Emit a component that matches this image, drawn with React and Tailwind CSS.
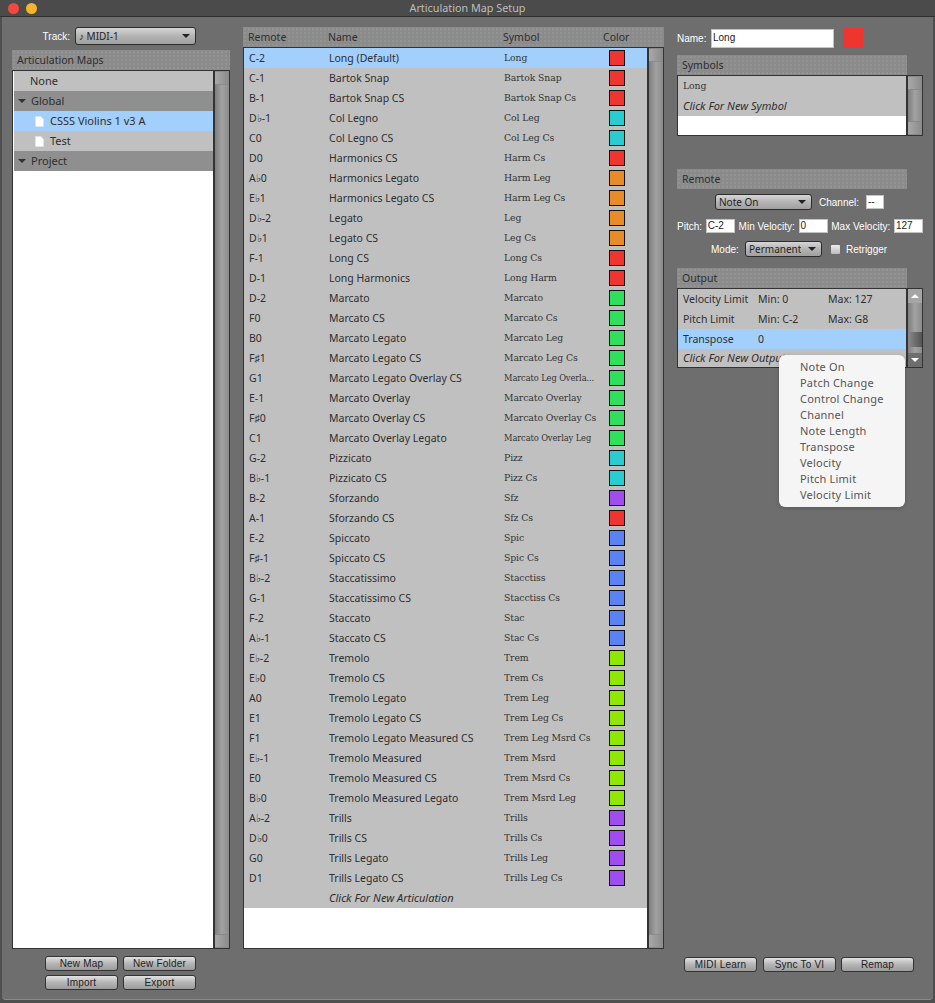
const RED = "bg-[#ee3530]";
const TEAL = "bg-[#2accd0]";
const ORANGE = "bg-[#e88c2a]";
const GREEN = "bg-[#30e05c]";
const PURPLE = "bg-[#a04df0]";
const BLUE = "bg-[#5b82f2]";
const LIME = "bg-[#90e800]";

const rows = [
  ["C-2", "Long (Default)", "Long", RED],
  ["C-1", "Bartok Snap", "Bartok Snap", RED],
  ["B-1", "Bartok Snap CS", "Bartok Snap Cs", RED],
  ["D♭-1", "Col Legno", "Col Leg", TEAL],
  ["C0", "Col Legno CS", "Col Leg Cs", TEAL],
  ["D0", "Harmonics CS", "Harm Cs", RED],
  ["A♭0", "Harmonics Legato", "Harm Leg", ORANGE],
  ["E♭1", "Harmonics Legato CS", "Harm Leg Cs", ORANGE],
  ["D♭-2", "Legato", "Leg", ORANGE],
  ["D♭1", "Legato CS", "Leg Cs", ORANGE],
  ["F-1", "Long CS", "Long Cs", RED],
  ["D-1", "Long Harmonics", "Long Harm", RED],
  ["D-2", "Marcato", "Marcato", GREEN],
  ["F0", "Marcato CS", "Marcato Cs", GREEN],
  ["B0", "Marcato Legato", "Marcato Leg", GREEN],
  ["F♯1", "Marcato Legato CS", "Marcato Leg Cs", GREEN],
  ["G1", "Marcato Legato Overlay CS", "Marcato Leg Overla...", GREEN],
  ["E-1", "Marcato Overlay", "Marcato Overlay", GREEN],
  ["F♯0", "Marcato Overlay CS", "Marcato Overlay Cs", GREEN],
  ["C1", "Marcato Overlay Legato", "Marcato Overlay Leg", GREEN],
  ["G-2", "Pizzicato", "Pizz", TEAL],
  ["B♭-1", "Pizzicato CS", "Pizz Cs", TEAL],
  ["B-2", "Sforzando", "Sfz", PURPLE],
  ["A-1", "Sforzando CS", "Sfz Cs", RED],
  ["E-2", "Spiccato", "Spic", BLUE],
  ["F♯-1", "Spiccato CS", "Spic Cs", BLUE],
  ["B♭-2", "Staccatissimo", "Stacctiss", BLUE],
  ["G-1", "Staccatissimo CS", "Stacctiss Cs", BLUE],
  ["F-2", "Staccato", "Stac", BLUE],
  ["A♭-1", "Staccato CS", "Stac Cs", BLUE],
  ["E♭-2", "Tremolo", "Trem", LIME],
  ["E♭0", "Tremolo CS", "Trem Cs", LIME],
  ["A0", "Tremolo Legato", "Trem Leg", LIME],
  ["E1", "Tremolo Legato CS", "Trem Leg Cs", LIME],
  ["F1", "Tremolo Legato Measured CS", "Trem Leg Msrd Cs", LIME],
  ["E♭-1", "Tremolo Measured", "Trem Msrd", LIME],
  ["E0", "Tremolo Measured CS", "Trem Msrd Cs", LIME],
  ["B♭0", "Tremolo Measured Legato", "Trem Msrd Leg", LIME],
  ["A♭-2", "Trills", "Trills", PURPLE],
  ["D♭0", "Trills CS", "Trills Cs", PURPLE],
  ["G0", "Trills Legato", "Trills Leg", PURPLE],
  ["D1", "Trills Legato CS", "Trills Leg Cs", PURPLE],
];

const menuItems = ["Note On", "Patch Change", "Control Change", "Channel", "Note Length", "Transpose", "Velocity", "Pitch Limit", "Velocity Limit"];

const headerClass =
  "h-5 flex items-center pl-[5px] pt-[1px] bg-[#8b8b8b] bg-[radial-gradient(#939393_1px,transparent_1px)] bg-[length:4px_4px] text-[#2e2e2e] text-[10.5px]";
const serif = "font-['DejaVu_Serif',serif] text-[9.3px] tracking-[-0.1px] text-[#333]";
// long symbols get squeezed to fit the column in the reference
const serifSmall = "font-['DejaVu_Serif',serif] text-[8.3px] tracking-[-0.1px] text-[#333]";

function Header({ children, className = "" }) {
  return <div className={`${headerClass} ${className}`}>{children}</div>;
}

function Scrollbar({ arrows, thumb }) {
  const cap = "h-[14px] shrink-0 bg-gradient-to-r from-[#a8a8a8] via-[#9a9a9a] to-[#8a8a8a] border-y border-[#8a8a8a]";
  return (
    <div className="w-4 shrink-0 flex flex-col justify-between border-l-2 border-[#333] bg-gradient-to-r from-[#7f7f7f] via-[#a2a2a2] to-[#8b8b8b] relative">
      {arrows ? (
        <div className="h-[14px] flex items-center justify-center bg-[#a5a5a5]">
          <div className="w-0 h-0 border-x-[4px] border-x-transparent border-b-[4px] border-b-white" />
        </div>
      ) : (
        <div className={cap} />
      )}
      {thumb && <div className="absolute left-0 right-0 top-[43px] h-[15px] bg-gradient-to-r from-[#8a8a8a] to-[#555]" />}
      {arrows ? (
        <div className="h-[14px] flex items-center justify-center bg-[#6e6e6e]">
          <div className="w-0 h-0 border-x-[4px] border-x-transparent border-t-[4px] border-t-white" />
        </div>
      ) : (
        <div className={cap} />
      )}
    </div>
  );
}

function Btn({ children, className = "" }) {
  return (
    <button className={`h-[15px] rounded-[3px] border border-[#333] bg-gradient-to-b from-[#e2e2e2] via-[#b5b5b5] to-[#9c9c9c] text-[10px] leading-none text-[#222] font-['Liberation_Sans',sans-serif] tracking-[0.2px] ${className}`}>
      {children}
    </button>
  );
}

function Select({ children, className = "" }) {
  return (
    <div className={`shrink-0 flex items-center justify-between rounded-[3px] border border-[#2c2c2c] bg-gradient-to-b from-[#d6d6d6] via-[#b4b4b4] to-[#a0a0a0] pl-[3px] pr-[5px] text-[10px] text-[#222] ${className}`}>
      <span className="truncate">{children}</span>
      <div className="w-0 h-0 border-x-[4px] border-x-transparent border-t-[4px] border-t-[#222]" />
    </div>
  );
}

function Field({ value, className = "" }) {
  return (
    <div className={`shrink-0 h-[14px] flex items-center bg-white border border-[#c4c4c4] px-[1px] text-[10px] leading-none text-[#222] font-['Liberation_Sans',sans-serif] ${className}`}>
      {value}
    </div>
  );
}

function FileIcon() {
  return (
    <svg width="9" height="11" viewBox="0 0 9 11" className="shrink-0">
      <path d="M0.5 0.5H5.8L8.5 3.2V10.5H0.5Z" fill="#fff" stroke="#e4e4e4" strokeWidth="0.6" />
    </svg>
  );
}

function Caret() {
  return <div className="w-0 h-0 border-x-[4px] border-x-transparent border-t-[4px] border-t-[#333] ml-[4px] mr-[5px]" />;
}

function Label({ children, className = "" }) {
  return <span className={`shrink-0 font-['Liberation_Sans',sans-serif] text-[10px] text-white ${className}`}>{children}</span>;
}

export default function App() {
  return (
    <div className="w-[935px] h-[1003px] overflow-hidden flex flex-col bg-[#4f4f4f] font-['Noto_Sans',sans-serif] relative">
      {/* Title bar */}
      <div className="h-[17px] shrink-0 relative flex items-center justify-center bg-[#4b4b4b] border-b border-[#2f2f2f]">
        <div className="absolute left-2 top-[3px] flex gap-[7px]">
          <div className="w-[11px] h-[11px] rounded-full bg-[#f04a3e]" />
          <div className="w-[11px] h-[11px] rounded-full bg-[#f6b32d]" />
        </div>
        <span className="text-[10.8px] text-[#bdbdbd]">Articulation Map Setup</span>
      </div>

      <div className="flex-1 flex mx-[2px] mb-[3px] rounded-b-[4px] border-b border-[#8a8a8a] bg-[#6e6e6e] pl-[10px] pr-[10px] pt-[10px] gap-[13px] min-h-0">
        {/* Left column */}
        <div className="w-[218px] shrink-0 flex flex-col">
          <div className="h-[18px] flex items-center justify-end gap-[5px] pr-[34px] mb-[5px]">
            <Label>Track:</Label>
            <Select className="w-[121px] h-[18px]">♪ MIDI-1</Select>
          </div>
          <Header>Articulation Maps</Header>
          <div className="h-[879px] flex border border-[#333] bg-white">
            <div className="flex-1 pl-[1px] text-[11px] text-[#2e2e2e]">
              <div className="h-[20px] flex items-center bg-[#c0c0c0] pl-[16px]">None</div>
              <div className="h-[20px] flex items-center bg-[#8f8f8f]"><Caret />Global</div>
              <div className="h-[20px] flex items-center gap-[6px] bg-[#a3cffd] pl-[21px] pt-[1px]"><FileIcon />CSSS Violins 1 v3 A</div>
              <div className="h-[20px] flex items-center gap-[6px] bg-[#c0c0c0] pl-[21px]"><FileIcon />Test</div>
              <div className="h-[20px] flex items-center bg-[#8f8f8f]"><Caret />Project</div>
            </div>
            <Scrollbar />
          </div>
          <div className="mt-[7px] grid grid-cols-[73px_73px] gap-x-[5px] gap-y-[4px] justify-center pr-[1px]">
            <Btn>New Map</Btn>
            <Btn>New Folder</Btn>
            <Btn>Import</Btn>
            <Btn>Export</Btn>
          </div>
        </div>

        {/* Articulation list */}
        <div className="w-[421px] shrink-0 flex flex-col">
          <Header>
            <span className="w-[80px]">Remote</span>
            <span className="w-[175px]">Name</span>
            <span className="w-[100px]">Symbol</span>
            <span>Color</span>
          </Header>
          <div className="h-[902px] flex border border-[#333] bg-white">
            <div className="flex-1 text-[10.5px] text-[#2e2e2e]">
              {rows.map(([remote, name, symbol, color], i) => (
                <div key={i} className={`h-5 flex items-center pl-[5px] ${i === 0 ? "bg-[#a3cffd]" : "bg-[#c0c0c0]"}`}>
                  <span className="w-[80px] shrink-0 pt-[1px]">{remote}</span>
                  <span className="w-[175px] shrink-0 pt-[1px]">{name}</span>
                  <span className={`w-[105px] shrink-0 truncate ${symbol.length > 18 ? serifSmall : serif}`}>{symbol}</span>
                  <div className={`w-4 h-4 border border-[#111] ${color}`} />
                </div>
              ))}
              <div className="h-5 flex items-center bg-[#c0c0c0] pl-[85px] italic text-[11px]">Click For New Articulation</div>
            </div>
            <Scrollbar />
          </div>
        </div>

        {/* Right column */}
        <div className="flex-1 flex flex-col relative">
          <div className="h-5 mt-[1px] flex items-center">
            <Label className="w-[34px]">Name:</Label>
            <Field value="Long" className="w-[123px] !h-[19px] text-[10.5px]" />
            <div className={`w-5 h-5 ml-[9px] ${RED}`} />
          </div>

          <Header className="w-[230px] mt-[7px]">Symbols</Header>
          <div className="h-[61px] flex border border-[#333] bg-white">
            <div className="flex-1 text-[11px] text-[#2e2e2e]">
              <div className={`h-5 flex items-center bg-[#c0c0c0] pl-[5px] ${serif}`}>Long</div>
              <div className="h-5 flex items-center bg-[#c0c0c0] pl-[5px] italic">Click For New Symbol</div>
            </div>
            <Scrollbar />
          </div>

          <Header className="w-[230px] mt-[33px]">Remote</Header>
          <div className="flex items-center mt-[5px] pl-[38px]">
            <Select className="w-[97px] h-[16px]">Note On</Select>
            <Label className="ml-[7px] w-[47px]">Channel:</Label>
            <Field value="--" className="w-[18px]" />
          </div>
          <div className="flex items-center justify-between mt-[9px] h-[14px]">
            <Label>Pitch:</Label>
            <Field value="C-2" className="w-[29px]" />
            <Label>Min Velocity:</Label>
            <Field value="0" className="w-[29px]" />
            <Label>Max Velocity:</Label>
            <Field value="127" className="w-[29px]" />
          </div>
          <div className="flex items-center mt-[8px] pl-[34px] h-[16px]">
            <Label className="w-[34px]">Mode:</Label>
            <Select className="w-[77px] h-[16px]">Permanent</Select>
            <div className="w-[9px] h-[9px] ml-[9px] rounded-[1px] bg-gradient-to-b from-[#eee] to-[#bbb]" />
            <Label className="ml-[6px] text-[#ddd]">Retrigger</Label>
          </div>

          <Header className="w-[230px] mt-[11px]">Output</Header>
          <div className="h-[80px] flex border border-[#333] bg-white">
            <div className="flex-1 text-[10.5px] text-[#2e2e2e]">
              <div className="h-5 flex items-center bg-[#c0c0c0] pl-[5px] pt-[1px]">
                <span className="w-[75px]">Velocity Limit</span>
                <span className="w-[70px]">Min: 0</span>
                <span>Max: 127</span>
              </div>
              <div className="h-5 flex items-center bg-[#c0c0c0] pl-[5px] pt-[1px]">
                <span className="w-[75px]">Pitch Limit</span>
                <span className="w-[70px]">Min: C-2</span>
                <span>Max: G8</span>
              </div>
              <div className="h-5 flex items-center bg-[#a3cffd] pl-[5px] pt-[1px]">
                <span className="w-[75px]">Transpose</span>
                <span>0</span>
              </div>
              <div className="h-[18px] flex items-center bg-[#c0c0c0] pl-[5px] italic text-[11px]">Click For New Output</div>
            </div>
            <Scrollbar arrows thumb />
          </div>

          <div className="mt-auto mb-[27px] ml-[7px] flex">
            <Btn className="w-[73px]">MIDI Learn</Btn>
            <Btn className="w-[73px] ml-[6px]">Sync To VI</Btn>
            <Btn className="w-[73px] ml-[5px]">Remap</Btn>
          </div>

          {/* Open popup menu */}
          <div className="absolute left-[102px] top-[328px] w-[126px] h-[152px] rounded-[6px] bg-[#f5f5f5] pt-[4px] pl-[21px] text-[11px] leading-4 tracking-[0.2px] text-[#555] shadow-[0_1px_4px_rgba(0,0,0,0.2)]">
            {menuItems.map((item) => (
              <div key={item}>{item}</div>
            ))}
          </div>
        </div>
      </div>
    </div>
  );
}
